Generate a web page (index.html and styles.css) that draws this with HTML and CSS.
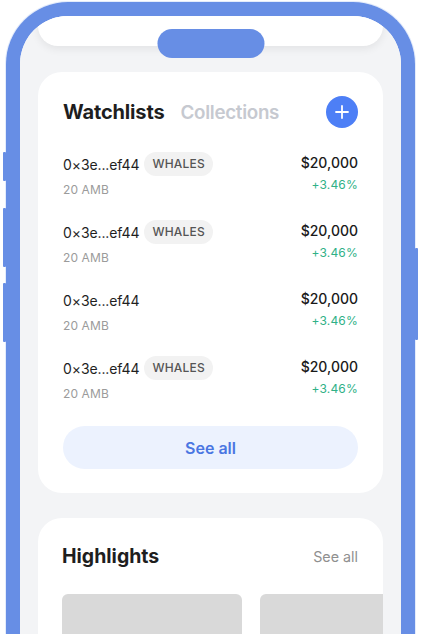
FILE: index.html
```html
<!DOCTYPE html>
<html lang="en">
<head>
<meta charset="utf-8">
<title>Watchlists</title>
<link rel="stylesheet" href="styles.css">
</head>
<body>
<div class="phone">
  <span class="side-btn btn-l1"></span>
  <span class="side-btn btn-l2"></span>
  <span class="side-btn btn-l3"></span>
  <span class="side-btn btn-r1"></span>
  <div class="notch"></div>
  <div class="screen">
    <div class="status"></div>

    <section class="card watch">
      <div class="card-head">
        <div class="tabs">
          <h2 class="tab active">Watchlists</h2>
          <h2 class="tab">Collections</h2>
        </div>
        <button class="add" aria-label="Add">
          <svg width="14" height="14" viewBox="0 0 14 14"><path d="M7 1v12M1 7h12" stroke="#fff" stroke-width="1.8" stroke-linecap="round"/></svg>
        </button>
      </div>

      <ul class="rows">
        <li class="row">
          <div class="left">
            <div class="line1"><span class="addr">0×3e...ef44</span><span class="tag">WHALES</span></div>
            <div class="amt">20 AMB</div>
          </div>
          <div class="right">
            <div class="price">$20,000</div>
            <div class="chg">+3.46%</div>
          </div>
        </li>
        <li class="row">
          <div class="left">
            <div class="line1"><span class="addr">0×3e...ef44</span><span class="tag">WHALES</span></div>
            <div class="amt">20 AMB</div>
          </div>
          <div class="right">
            <div class="price">$20,000</div>
            <div class="chg">+3.46%</div>
          </div>
        </li>
        <li class="row">
          <div class="left">
            <div class="line1"><span class="addr">0×3e...ef44</span></div>
            <div class="amt">20 AMB</div>
          </div>
          <div class="right">
            <div class="price">$20,000</div>
            <div class="chg">+3.46%</div>
          </div>
        </li>
        <li class="row">
          <div class="left">
            <div class="line1"><span class="addr">0×3e...ef44</span><span class="tag">WHALES</span></div>
            <div class="amt">20 AMB</div>
          </div>
          <div class="right">
            <div class="price">$20,000</div>
            <div class="chg">+3.46%</div>
          </div>
        </li>
      </ul>

      <button class="see-all-btn">See all</button>
    </section>

    <section class="card highlights">
      <div class="hl-head">
        <h2 class="hl-title">Highlights</h2>
        <a class="hl-link">See all</a>
      </div>
      <div class="hl-items">
        <div class="hl-box"></div>
        <div class="hl-box"></div>
      </div>
    </section>
  </div>
</div>
</body>
</html>
```
FILE: styles.css
```css
* { box-sizing: border-box; }
html, body {
  margin: 0;
  padding: 0;
  height: 634px;
  overflow: hidden;
  background: #ffffff;
  font-family: Inter, "Noto Sans", sans-serif;
}
h2, ul { margin: 0; padding: 0; }
li { list-style: none; }
button { font-family: inherit; border: 0; cursor: pointer; }

.phone {
  position: relative;
  margin: 2px 0 0 6px;
  width: 409px;
  height: 720px;
  border: 14px solid #678ee5;
  border-bottom: 0;
  border-radius: 62px 62px 0 0;
  box-shadow: 0 0 0 1px #e4ecfb;
}
.side-btn {
  position: absolute;
  width: 3px;
  background: #678ee5;
  border-radius: 1px;
}
.btn-l1 { left: -17px; top: 136px; height: 29px; }
.btn-l2 { left: -17px; top: 192px; height: 59px; }
.btn-l3 { left: -17px; top: 267px; height: 59px; }
.btn-r1 { right: -17px; top: 232px; height: 92px; }

.notch {
  position: absolute;
  top: 13px;
  left: 50%;
  transform: translateX(-50%);
  width: 107px;
  height: 29px;
  border-radius: 15px;
  background: #678ee5;
  z-index: 2;
}

.screen {
  height: 100%;
  background: #f3f4f6;
  border-radius: 48px 48px 0 0;
  padding: 0 18px;
  overflow: hidden;
}
.status {
  height: 30px;
  background: #ffffff;
  border-radius: 0 0 20px 20px;
  box-shadow: 0 3px 8px rgba(0, 0, 0, 0.07);
}

.card {
  background: #ffffff;
  border-radius: 24px;
}
.watch {
  margin-top: 26px;
  padding: 24px 25px;
}
.card-head {
  height: 32px;
  display: flex;
  align-items: center;
  justify-content: space-between;
}
.tabs { display: flex; gap: 16px; align-items: center; }
.tab {
  font-size: 18.8px;
  font-weight: 600;
  color: #c6c9d0;
  letter-spacing: -0.3px;
}
.tab.active { color: #1e1e1e; font-weight: 700; font-size: 20px; letter-spacing: -0.15px; }
.add {
  width: 32px;
  height: 32px;
  border-radius: 50%;
  background: #4d7ff6;
  display: flex;
  align-items: center;
  justify-content: center;
  padding: 0;
}

.rows {
  margin-top: 24px;
  display: flex;
  flex-direction: column;
  gap: 22px;
}
.row {
  display: flex;
  justify-content: space-between;
  height: 46px;
}
.line1 {
  height: 24px;
  display: flex;
  align-items: center;
  gap: 5px;
}
.addr {
  font-size: 14px;
  color: #1f1f1f;
  letter-spacing: -0.1px;
}
.tag {
  height: 24px;
  line-height: 24px;
  padding: 0 8px;
  border-radius: 12px;
  background: #f2f2f2;
  color: #555555;
  font-size: 12px;
  font-weight: 500;
  letter-spacing: 0.2px;
}
.amt {
  margin-top: 6px;
  line-height: 16px;
  font-size: 12px;
  color: #9b9b9b;
  letter-spacing: 0.1px;
}
.right {
  text-align: right;
}
.price {
  line-height: 22px;
  font-size: 14px;
  font-weight: 500;
  color: #1a1a1a;
}
.chg {
  margin-top: 3px;
  line-height: 16px;
  font-size: 12px;
  color: #2fb187;
  letter-spacing: 0.2px;
}

.see-all-btn {
  display: block;
  width: 100%;
  margin-top: 24px;
  height: 43px;
  border-radius: 22px;
  background: #ecf2fe;
  color: #4a76e2;
  font-size: 16px;
  font-weight: 600;
}

.highlights {
  margin-top: 25px;
  padding: 24px 0 24px 24px;
  overflow: hidden;
}
.hl-head {
  height: 28px;
  display: flex;
  align-items: center;
  justify-content: space-between;
  padding-right: 25px;
}
.hl-title {
  font-size: 19.5px;
  font-weight: 700;
  color: #1e1e1e;
}
.hl-link {
  font-size: 14.3px;
  color: #8f8f8f;
}
.hl-items {
  margin-top: 24px;
  display: flex;
  gap: 18px;
}
.hl-box {
  flex: 0 0 180px;
  height: 140px;
  border-radius: 6px;
  background: #d9d9d9;
}
```
